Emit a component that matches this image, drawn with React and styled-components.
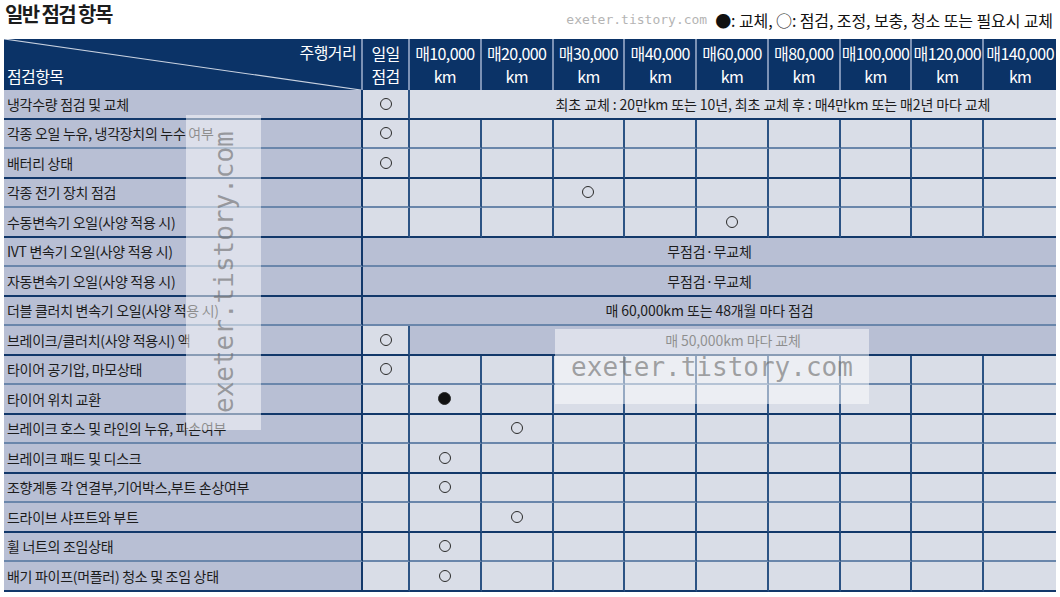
import React from 'react'
import styled, { createGlobalStyle } from 'styled-components'

const KM = ['10,000', '20,000', '30,000', '40,000', '60,000', '80,000', '100,000', '120,000', '140,000']

// span.from: 'daily' starts at the 일일 column, 'km' at the first km column
const rows = [
    { label: '냉각수량 점검 및 교체', daily: 'o', span: { from: 'km', tone: 'light', shift: 80, text: '최초 교체 : 20만km 또는 10년, 최초 교체 후 : 매4만km 또는 매2년 마다 교체' } },
    { label: '각종 오일 누유, 냉각장치의 누수 여부', daily: 'o' },
    { label: '배터리 상태', daily: 'o' },
    { label: '각종 전기 장치 점검', marks: { 2: 'o' } },
    { label: '수동변속기 오일(사양 적용 시)', marks: { 4: 'o' } },
    { label: 'IVT 변속기 오일(사양 적용 시)', span: { from: 'daily', tone: 'dark', text: '무점검·무교체' } },
    { label: '자동변속기 오일(사양 적용 시)', span: { from: 'daily', tone: 'dark', text: '무점검·무교체' } },
    { label: '더블 클러치 변속기 오일(사양 적용 시)', span: { from: 'daily', tone: 'dark', text: '매 60,000km 또는 48개월 마다 점검' } },
    { label: '브레이크/클러치(사양 적용시) 액', daily: 'o', span: { from: 'km', tone: 'dark', text: '매 50,000km 마다 교체' } },
    { label: '타이어 공기압, 마모상태', daily: 'o' },
    { label: '타이어 위치 교환', marks: { 0: 'x' } },
    { label: '브레이크 호스 및 라인의 누유, 파손여부', marks: { 1: 'o' } },
    { label: '브레이크 패드 및 디스크', marks: { 0: 'o' } },
    { label: '조향계통 각 연결부,기어박스,부트 손상여부', marks: { 0: 'o' } },
    { label: '드라이브 샤프트와 부트', marks: { 1: 'o' } },
    { label: '휠 너트의 조임상태', marks: { 0: 'o' } },
    { label: '배기 파이프(머플러) 청소 및 조임 상태', marks: { 0: 'o' } },
]

const Mark = ({ type }) => (type ? <Dot $filled={type === 'x'} /> : null)

const App = () => {
    return (
        <Container>
            <GlobalStyle />
            <TopBar>
                <Title>일반 점검 항목</Title>
                <Legend>
                    <SiteMark>exeter.tistory.com</SiteMark>
                    <span>●: 교체, ○: 점검, 조정, 보충, 청소 또는 필요시 교체</span>
                </Legend>
            </TopBar>

            <Table>
                <CornerHead>
                    <Diagonal viewBox="0 0 100 100" preserveAspectRatio="none">
                        <line x1="0" y1="0" x2="100" y2="100" stroke="#c9d2e0" strokeWidth="1.2" vectorEffect="non-scaling-stroke" />
                    </Diagonal>
                    <CornerTop>주행거리</CornerTop>
                    <CornerBottom>점검항목</CornerBottom>
                </CornerHead>
                <HeadCell>일일<br />점검</HeadCell>
                {KM.map((km, i) => (
                    <HeadCell key={km} $last={i === KM.length - 1}>매{km}<br />km</HeadCell>
                ))}

                {rows.map((row, r) => {
                    const line = r % 2 === 0 ? 'dark' : 'light'
                    const cells = []
                    cells.push(<Label key="l" $line={line}>{row.label}</Label>)
                    if (row.span && row.span.from === 'daily') {
                        cells.push(
                            <SpanCell key="s" $span={10} $tone={row.span.tone} $line={line}>{row.span.text}</SpanCell>
                        )
                        return cells
                    }
                    cells.push(<Cell key="d" $line={line}><Mark type={row.daily} /></Cell>)
                    if (row.span) {
                        cells.push(
                            <SpanCell key="s" $span={9} $tone={row.span.tone} $shift={row.span.shift} $line={line}>{row.span.text}</SpanCell>
                        )
                        return cells
                    }
                    KM.forEach((km, i) => {
                        cells.push(
                            <Cell key={km} $line={line} $last={i === KM.length - 1}>
                                <Mark type={row.marks && row.marks[i]} />
                            </Cell>
                        )
                    })
                    return cells
                })}

                <WaterTall>exeter.tistory.com</WaterTall>
                <WaterWide>exeter.tistory.com</WaterWide>
            </Table>
        </Container>
    )
}

export default App

const GlobalStyle = createGlobalStyle`
    body {
        margin: 0;
        background: #ffffff;
        font-family: "Noto Sans CJK KR", "Noto Sans", sans-serif;
        color: #1c1c1c;
    }
`

const lineColor = (l) => (l === 'dark' ? '#12386a' : '#6a86ab')

const Container = styled.div`
    width: 1060px;
    height: 597px;
    padding-left: 4px;
    box-sizing: border-box;
    overflow: hidden;
`
const TopBar = styled.div`
    height: 39px;
    display: flex;
    justify-content: space-between;
    align-items: flex-start;
    padding-right: 7px;
`
const Title = styled.div`
    font-size: 20px;
    font-weight: 700;
    letter-spacing: -1.6px;
    line-height: 28px;
    padding-left: 1px;
`
const Legend = styled.div`
    display: flex;
    align-items: center;
    gap: 8px;
    margin-top: 8px;
    font-size: 16px;
    letter-spacing: -0.1px;
    line-height: 24px;
    color: #111;
`
const SiteMark = styled.span`
    font-family: "DejaVu Sans Mono", monospace;
    font-size: 13px;
    letter-spacing: 0;
    color: #b4b4b4;
`
const Table = styled.div`
    position: relative;
    width: 1052px;
    display: grid;
    grid-template-columns: 359px 47px repeat(9, 1fr);
    grid-template-rows: 51px repeat(17, 29.53px);
`
const HeadCell = styled.div`
    background: #0b3367;
    color: #ffffff;
    border-right: ${(p) => (p.$last ? 'none' : '2px solid #7c92b5')};
    box-sizing: border-box;
    display: flex;
    align-items: center;
    justify-content: center;
    text-align: center;
    font-size: 16px;
    line-height: 23px;
    letter-spacing: -0.6px;
    padding-top: 1px;
`
const CornerHead = styled(HeadCell)`
    position: relative;
    display: block;
    border-right: 2px solid #7c92b5;
`
const Diagonal = styled.svg`
    position: absolute;
    inset: 0;
    width: 100%;
    height: 100%;
`
const CornerTop = styled.div`
    position: absolute;
    top: 2px;
    right: 5px;
`
const CornerBottom = styled.div`
    position: absolute;
    bottom: 2px;
    left: 3px;
`
const Label = styled.div`
    background: #b8bfd4;
    border-right: 2px solid #12386a;
    border-bottom: 2px solid ${(p) => lineColor(p.$line)};
    box-sizing: border-box;
    display: flex;
    align-items: center;
    padding-left: 3px;
    font-size: 14px;
    letter-spacing: -0.3px;
    white-space: nowrap;
`
const Cell = styled.div`
    background: #d9dde7;
    border-right: ${(p) => (p.$last ? 'none' : '2px solid #2c5384')};
    border-bottom: 2px solid ${(p) => lineColor(p.$line)};
    box-sizing: border-box;
    display: flex;
    align-items: center;
    justify-content: center;
`
const SpanCell = styled.div`
    grid-column: span ${(p) => p.$span};
    background: ${(p) => (p.$tone === 'light' ? '#d9dde7' : '#b8bfd4')};
    border-bottom: 2px solid ${(p) => lineColor(p.$line)};
    box-sizing: border-box;
    display: flex;
    align-items: center;
    justify-content: center;
    padding-left: ${(p) => p.$shift || 0}px;
    font-size: 14px;
    letter-spacing: -0.1px;
    white-space: nowrap;
`
const Dot = styled.span`
    width: 12px;
    height: 12px;
    border-radius: 50%;
    box-sizing: border-box;
    border: 1.4px solid #2a2a2a;
    background: ${(p) => (p.$filled ? '#111' : 'transparent')};
    ${(p) => p.$filled && 'width: 13px; height: 13px;'}
`
const Watermark = styled.div`
    position: absolute;
    background: rgba(255, 255, 255, 0.5);
    font-family: "DejaVu Sans Mono", monospace;
    font-size: 26px;
    color: rgba(105, 105, 105, 0.6);
    display: flex;
    align-items: center;
    justify-content: center;
    white-space: nowrap;
    pointer-events: none;
`
const WaterTall = styled(Watermark)`
    left: 182px;
    top: 76px;
    width: 75px;
    height: 315px;
    writing-mode: vertical-rl;
    transform: rotate(180deg);
`
const WaterWide = styled(Watermark)`
    left: 551px;
    top: 290px;
    width: 314px;
    height: 75px;
`
